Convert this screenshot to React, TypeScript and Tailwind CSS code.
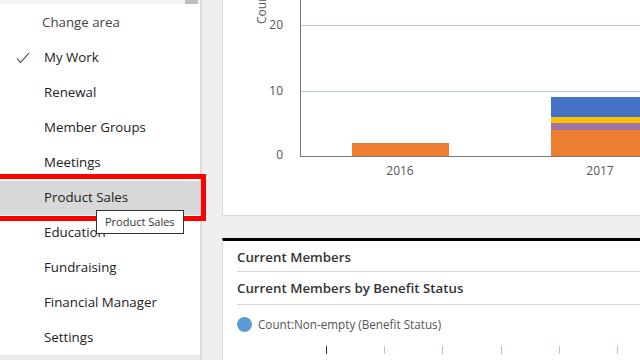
const areas = [
  'My Work',
  'Renewal',
  'Member Groups',
  'Meetings',
  'Product Sales',
  'Education',
  'Fundraising',
  'Financial Manager',
  'Settings',
]

const font = { fontFamily: '"Segoe UI", "Open Sans", "Noto Sans", sans-serif' }

function Check() {
  return (
    <svg width="14" height="12" viewBox="0 0 14 12" className="text-[#333]">
      <path d="M1 6.5 L4.5 10.5 L13 1" fill="none" stroke="currentColor" strokeWidth="1.1" />
    </svg>
  )
}

function AreaMenu() {
  return (
    <div className="relative z-10 flex h-full w-[200px] shrink-0 flex-col bg-white shadow-[1px_0_2px_rgba(0,0,0,0.15)]">
      <div className="relative h-[4px] bg-[#f3f3f3]">
        <div className="absolute left-[185px] top-0 h-[4px] w-[13px] bg-[#bdbdbd]" />
      </div>
      <div className="flex h-[37px] items-center pl-[42px] pt-[1px] text-[13.3px] text-[#444]">Change area</div>
      {areas.map((a) => (
        <div
          key={a}
          className={`relative flex h-[35px] items-center text-[13.3px] text-[#222] ${a === 'Product Sales' ? 'bg-[#d8d8d8]' : ''}`}
        >
          <div className="flex w-[44px] justify-center pl-[1px]">{a === 'My Work' && <Check />}</div>
          <span>{a}</span>
          {a === 'Product Sales' && (
            <>
              <div className="pointer-events-none absolute left-[-10px] top-[-7px] h-[47px] w-[216px] border-[5px] border-[#ff0000]" />
              <div className="absolute left-[96px] top-[29px] z-20 border border-[#333] bg-white px-[8px] py-[3px] text-[11px] leading-[16px] text-[#333]">
                Product Sales
              </div>
            </>
          )}
        </div>
      ))}
      <div className="mt-auto h-[5px] bg-[#ebebeb]" />
    </div>
  )
}

function ChartCard() {
  const grid = '#a9c9ef'
  return (
    <div className="h-[216px] border-b border-l border-[#d6d6d6] bg-white">
      <svg width="418" height="215" className="block" style={font}>
        <line x1="77" y1="25.5" x2="418" y2="25.5" stroke={grid} />
        <line x1="77" y1="91.5" x2="418" y2="91.5" stroke={grid} />
        <text x="60" y="29" fontSize="12" fill="#555" textAnchor="end">20</text>
        <text x="60" y="95" fontSize="12" fill="#555" textAnchor="end">10</text>
        <text x="60" y="159" fontSize="12" fill="#555" textAnchor="end">0</text>
        <text x="0" y="0" fontSize="12" fill="#555" transform="translate(43 24) rotate(-90)">Count:All</text>
        <rect x="129" y="143" width="97" height="13" fill="#ed7d31" />
        <rect x="328" y="97" width="92" height="20" fill="#4472c4" />
        <rect x="328" y="117" width="92" height="6" fill="#ffc000" />
        <rect x="328" y="123" width="92" height="7" fill="#9e72a6" />
        <rect x="328" y="130" width="92" height="26" fill="#ed7d31" />
        <line x1="77.5" y1="0" x2="77.5" y2="156" stroke="#777" />
        <line x1="77" y1="156.5" x2="418" y2="156.5" stroke="#777" />
        <text x="177" y="175" fontSize="12" fill="#555" textAnchor="middle">2016</text>
        <text x="377" y="175" fontSize="12" fill="#555" textAnchor="middle">2017</text>
      </svg>
    </div>
  )
}

function MembersCard() {
  return (
    <div className="flex-1 border-l border-t-[3px] border-l-[#d6d6d6] border-t-black bg-white pl-[14px]">
      <div className="flex h-[31px] items-center border-b border-[#d6d6d6] pt-[4px] text-[13.3px] font-semibold text-[#333]">
        Current Members
      </div>
      <div className="flex h-[33px] items-center border-b border-[#d6d6d6] pt-[2px] text-[13.3px] font-semibold text-[#333]">
        Current Members by Benefit Status
      </div>
      <div className="flex h-[39px] items-center gap-[6px] text-[11.7px] text-[#555]">
        <span className="h-[15px] w-[15px] rounded-full bg-[#5b9bd5]" />
        <span>Count:Non-empty (Benefit Status)</span>
      </div>
      <svg width="404" height="10" className="block">
        <line x1="89.5" y1="2" x2="89.5" y2="10" stroke="#333" />
        {[147, 205, 264, 322, 380].map((x) => (
          <line key={x} x1={x + 0.5} y1="2" x2={x + 0.5} y2="10" stroke="#a9c9ef" />
        ))}
      </svg>
    </div>
  )
}

export default function App() {
  return (
    <div className="relative flex h-[360px] w-[640px] overflow-hidden bg-[#efefef]" style={font}>
      <AreaMenu />
      <div className="flex min-w-0 flex-1 flex-col pl-[22px]">
        <ChartCard />
        <div className="h-[22px] shrink-0" />
        <MembersCard />
      </div>
    </div>
  )
}
